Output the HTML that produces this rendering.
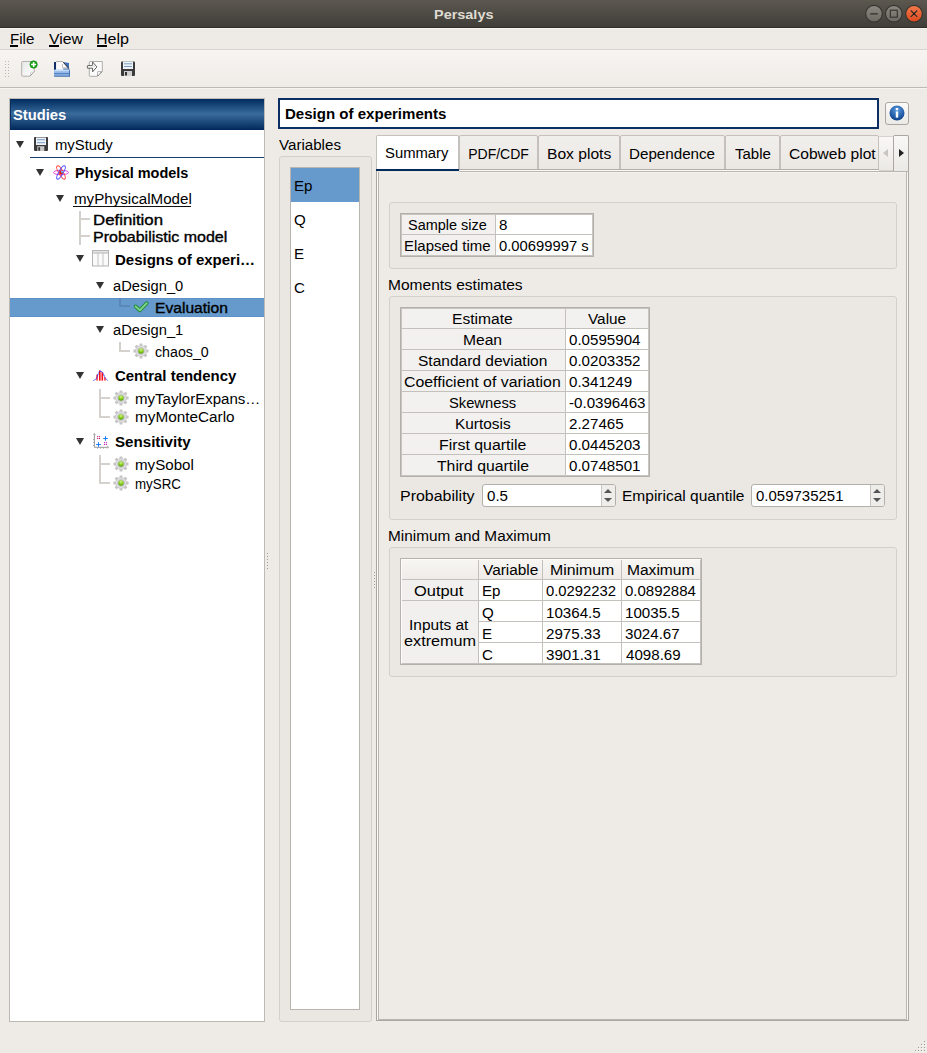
<!DOCTYPE html>
<html><head><meta charset="utf-8"><title>Persalys</title>
<style>
html,body{margin:0;padding:0;}
body{width:927px;height:1053px;position:relative;overflow:hidden;background:#eeebe7;font-family:"Liberation Sans",sans-serif;}
.a{position:absolute;box-sizing:border-box;}
.t{position:absolute;white-space:nowrap;line-height:1;transform-origin:0 0;font-family:"Liberation Sans",sans-serif;}
.tri{position:absolute;width:0;height:0;border-left:4px solid transparent;border-right:4px solid transparent;border-top:7px solid #333;}

</style></head><body>
<!-- title bar -->
<div class="a" style="left:0;top:0;width:927px;height:27px;background:linear-gradient(#5c5850,#403e39)"></div>
<div class="a" style="left:0;top:27px;width:927px;height:1px;background:#302e2a"></div>
<div class="a" style="left:0;top:28px;width:927px;height:1px;background:#f7f5f2"></div>
<!-- window buttons -->
<svg class="a" style="left:864px;top:4px" width="62" height="20" viewBox="0 0 62 20">
 <defs>
  <linearGradient id="gb" x1="0" y1="0" x2="0" y2="1"><stop offset="0" stop-color="#8d8982"/><stop offset="1" stop-color="#6b6862"/></linearGradient>
  <linearGradient id="go" x1="0" y1="0" x2="0" y2="1"><stop offset="0" stop-color="#f47a4c"/><stop offset="1" stop-color="#dc4a1f"/></linearGradient>
 </defs>
 <circle cx="10" cy="9.7" r="8.3" fill="url(#gb)" stroke="#35332f" stroke-width="1.1"/>
 <rect x="6.2" y="9.2" width="7.6" height="1.3" fill="#33312d"/>
 <circle cx="29.8" cy="9.7" r="8.3" fill="url(#gb)" stroke="#35332f" stroke-width="1.1"/>
 <rect x="26.3" y="6.2" width="7" height="7" fill="none" stroke="#33312d" stroke-width="1.1"/>
 <circle cx="50" cy="9.7" r="8.3" fill="url(#go)" stroke="#35332f" stroke-width="1.1"/>
 <path d="M46.8 6.5 L53.2 12.9 M53.2 6.5 L46.8 12.9" stroke="#2e2a26" stroke-width="1.1"/>
 <circle cx="50" cy="9.7" r="1" fill="#1e1a16"/>
</svg>
<!-- menubar -->
<div class="a" style="left:0;top:49px;width:927px;height:1px;background:#d8d4cf"></div>
<div class="a" style="left:10px;top:45px;width:8px;height:2px;background:#000"></div>
<div class="a" style="left:49px;top:45px;width:10px;height:2px;background:#000"></div>
<div class="a" style="left:97px;top:45px;width:10px;height:2px;background:#000"></div>
<!-- toolbar -->
<div class="a" style="left:0;top:50px;width:927px;height:37px;background:linear-gradient(#f7f5f1,#efece8)"></div>
<div class="a" style="left:0;top:87px;width:927px;height:1px;background:#bcb8b3"></div>
<div class="a" style="left:0;top:88px;width:927px;height:1px;background:#f7f5f2"></div>
<svg class="a" style="left:4px;top:61px" width="6" height="18" viewBox="0 0 6 18">
 <g fill="#b9b5b0"><rect x="1" y="0" width="1" height="1"/><rect x="4" y="0" width="1" height="1"/>
 <rect x="1" y="3" width="1" height="1"/><rect x="4" y="3" width="1" height="1"/>
 <rect x="1" y="6" width="1" height="1"/><rect x="4" y="6" width="1" height="1"/>
 <rect x="1" y="9" width="1" height="1"/><rect x="4" y="9" width="1" height="1"/>
 <rect x="1" y="12" width="1" height="1"/><rect x="4" y="12" width="1" height="1"/>
 <rect x="1" y="15" width="1" height="1"/><rect x="4" y="15" width="1" height="1"/></g>
</svg>
<!-- new doc icon -->
<svg class="a" style="left:17px;top:57px" width="24" height="24" viewBox="0 0 24 24">
 <defs><linearGradient id="pg1" x1="0" y1="0" x2="1" y2="1"><stop offset="0" stop-color="#e6e8e8"/><stop offset="1" stop-color="#ffffff"/></linearGradient></defs>
 <path d="M5.5 4.5 H17.2 V14.8 L12.8 19.2 H5.5 Q4.7 19.2 4.7 18.4 V5.3 Q4.7 4.5 5.5 4.5 Z" fill="url(#pg1)" stroke="#b3afaa" stroke-width="1"/>
 <path d="M13 19 L17.2 14.8" stroke="#6a6a6a" stroke-width="0.9" stroke-dasharray="1 0.8"/>
 <path d="M13.4 18.2 L13.6 15.2 L16.6 15" fill="#f4f4f4" stroke="#c8c8c8" stroke-width="0.6"/>
 <circle cx="16.6" cy="7.5" r="3.7" fill="#19a319"/>
 <circle cx="16.6" cy="7.5" r="3.7" fill="none" stroke="#0d860d" stroke-width="0.6"/>
 <path d="M16.6 5 V10 M14.1 7.5 H19.1" stroke="#fff" stroke-width="1.5"/>
</svg>
<!-- open icon -->
<svg class="a" style="left:50px;top:57px" width="24" height="24" viewBox="0 0 24 24">
 <defs><linearGradient id="tr1" x1="0" y1="0" x2="0" y2="1"><stop offset="0" stop-color="#b6d2f4"/><stop offset="0.5" stop-color="#8db2e4"/><stop offset="1" stop-color="#6f9ad4"/></linearGradient></defs>
 <rect x="4" y="5" width="2.2" height="8" fill="#0f2f66"/>
 <path d="M13 5 L19 6 V13 H13 Z" fill="#3f6fb8"/>
 <rect x="6.2" y="4.3" width="7" height="8.7" fill="#f9f9f9"/>
 <path d="M6.2 4.5 H13" stroke="#a9a6a2" stroke-width="0.9"/>
 <path d="M13 4.8 L18.8 11.6 H13 Z" fill="#fbfbfb"/>
 <path d="M13.2 5.2 L18.8 11.6" stroke="#111" stroke-width="0.9"/>
 <path d="M12.5 7 V10.8 H17" fill="none" stroke="#b0b0b0" stroke-width="0.8"/>
 <rect x="4" y="12.5" width="15.8" height="7.2" rx="1" fill="url(#tr1)"/>
 <rect x="5" y="13" width="14" height="0.8" fill="#cfe3fb"/>
 <rect x="4" y="16.2" width="15.8" height="0.8" fill="#4d7dc0"/>
 <rect x="4" y="19" width="15.8" height="0.7" fill="#5f7fae"/>
 <rect x="19" y="12.5" width="0.8" height="7" fill="#3a63a5"/>
</svg>
<!-- import icon -->
<svg class="a" style="left:83px;top:57px" width="24" height="24" viewBox="0 0 24 24">
 <path d="M7 4.5 H19.3 V14.3 L14.3 19.3 H7 Q6.3 19.3 6.3 18.6 V5.2 Q6.3 4.5 7 4.5 Z" fill="#fbfbfb" stroke="#b1ada8" stroke-width="1"/>
 <path d="M14.5 19 V15 Q14.5 14.5 15 14.5 H19" fill="#f6f6f6" stroke="#a9a9a9" stroke-width="0.8"/>
 <path d="M14.5 19 L19.2 14.4" stroke="#333" stroke-width="0.9" stroke-dasharray="0.9 0.7"/>
 <path d="M4.6 8.6 H9.6 V5 L13.9 9.9 L9.6 14.8 V11.2 H4.6 Q3.9 9.9 4.6 8.6 Z" fill="#fff" stroke="#505050" stroke-width="0.9" stroke-linejoin="round"/>
 <path d="M9.3 9.2 H12" stroke="#e6e6e6" stroke-width="1.6"/>
</svg>
<!-- save icon -->
<svg class="a" style="left:121px;top:61px" width="15" height="16" viewBox="0 0 15 16">
 <rect x="0" y="0.5" width="14" height="14.5" rx="1" fill="#3b3b3b"/>
 <rect x="2" y="0.5" width="10" height="7.5" fill="#eef3f8"/>
 <rect x="3" y="2.3" width="8" height="1" fill="#7b9cc4"/>
 <rect x="3" y="5" width="8" height="1" fill="#7b9cc4"/>
 <rect x="3" y="10" width="8" height="5" fill="#d0d0d0"/>
 <rect x="4" y="11" width="2" height="3.5" fill="#333"/>
</svg>

<!-- Studies panel -->
<div class="a" style="left:9px;top:98px;width:256px;height:924px;background:#fff;border:1px solid #bdb9b4"></div>
<div class="a" style="left:10px;top:99px;width:254px;height:31px;background:linear-gradient(#002b5e 0%,#3a6b9d 48%,#00285a 100%)"></div>
<div class="a" style="left:10px;top:99px;width:1px;height:31px;background:#0a2f5e"></div>
<!-- myStudy row -->
<div class="tri" style="left:16px;top:141px"></div>
<svg class="a" style="left:34px;top:137px" width="14" height="14" viewBox="0 0 14 14">
 <rect x="0" y="0" width="14" height="14" rx="1" fill="#3b3b3b"/>
 <rect x="2" y="0.5" width="10" height="7.5" fill="#eef3f8"/>
 <rect x="3" y="2.2" width="8" height="1" fill="#7b9cc4"/>
 <rect x="3" y="5.2" width="8" height="1" fill="#7b9cc4"/>
 <rect x="3.3" y="9.2" width="7" height="4.8" fill="#c8c8c8"/>
 <rect x="4.3" y="10.2" width="1.8" height="3.5" fill="#333"/>
</svg>
<div class="a" style="left:30px;top:157px;width:234px;height:1px;background:#1a3d6b"></div>
<!-- physical models -->
<div class="tri" style="left:36px;top:169px"></div>
<svg class="a" style="left:53px;top:165px" width="16" height="15" viewBox="0 0 16 15">
 <ellipse cx="8" cy="7.5" rx="7.5" ry="2.2" fill="none" stroke="#e040e0" stroke-width="1"/>
 <ellipse cx="8" cy="7.5" rx="7.5" ry="2.2" fill="none" stroke="#ff4040" stroke-width="1" transform="rotate(60 8 7.5)"/>
 <ellipse cx="8" cy="7.5" rx="7.5" ry="2.2" fill="none" stroke="#4a4aff" stroke-width="1" transform="rotate(-60 8 7.5)"/>
 <circle cx="8" cy="7.5" r="2" fill="#e02020"/>
 <circle cx="9" cy="6.8" r="1" fill="#40d0ff"/>
</svg>
<!-- myPhysicalModel -->
<div class="tri" style="left:56px;top:195px"></div>
<div class="a" style="left:73px;top:206px;width:118px;height:1px;background:#111"></div>
<!-- branch lines -->
<!-- designs -->
<div class="tri" style="left:76px;top:255px"></div>
<svg class="a" style="left:92px;top:250px" width="17" height="17" viewBox="0 0 17 17">
 <rect x="0.5" y="0.5" width="16" height="15.5" fill="#fafafa" stroke="#b3b3b3"/>
 <rect x="0.5" y="0.5" width="16" height="2.5" fill="#e6e6e6" stroke="#b3b3b3"/>
 <path d="M6 3 V16 M11 3 V16" stroke="#c4c4c4"/>
</svg>
<!-- aDesign_0 -->
<div class="tri" style="left:96px;top:282px"></div>
<!-- selected row -->
<div class="a" style="left:10px;top:298px;width:254px;height:19px;background:#6699cc;border-top:1px solid #5d91c7;border-bottom:1px solid #5d91c7"></div>
<svg class="a" style="left:130px;top:298px" width="22" height="18" viewBox="0 0 22 18">
 <path d="M5.6 8.4 L9.9 12.3 L16.6 5.2" fill="none" stroke="#178a30" stroke-width="3.8" stroke-linejoin="round" stroke-linecap="round"/>
 <path d="M5.6 8.4 L9.9 12.3 L16.6 5.2" fill="none" stroke="#7dcf8a" stroke-width="2" stroke-linejoin="round" stroke-linecap="round"/>
</svg>
<!-- aDesign_1 -->
<div class="tri" style="left:96px;top:326px"></div>
<svg class="a" style="left:133px;top:343px" width="16" height="16" viewBox="0 0 16 16"><defs><radialGradient id="gg133343" cx="0.5" cy="0.3" r="0.7"><stop offset="0" stop-color="#d8f59a"/><stop offset="0.5" stop-color="#8ccf1e"/><stop offset="1" stop-color="#4f9a10"/></radialGradient></defs><rect x="6.5" y="0.4" width="3" height="3.6" rx="0.5" fill="#c6c6c6" transform="rotate(0 8 8)"/><rect x="6.5" y="0.4" width="3" height="3.6" rx="0.5" fill="#c6c6c6" transform="rotate(45 8 8)"/><rect x="6.5" y="0.4" width="3" height="3.6" rx="0.5" fill="#c6c6c6" transform="rotate(90 8 8)"/><rect x="6.5" y="0.4" width="3" height="3.6" rx="0.5" fill="#c6c6c6" transform="rotate(135 8 8)"/><rect x="6.5" y="0.4" width="3" height="3.6" rx="0.5" fill="#c6c6c6" transform="rotate(180 8 8)"/><rect x="6.5" y="0.4" width="3" height="3.6" rx="0.5" fill="#c6c6c6" transform="rotate(225 8 8)"/><rect x="6.5" y="0.4" width="3" height="3.6" rx="0.5" fill="#c6c6c6" transform="rotate(270 8 8)"/><rect x="6.5" y="0.4" width="3" height="3.6" rx="0.5" fill="#c6c6c6" transform="rotate(315 8 8)"/><circle cx="8" cy="8" r="5.4" fill="#e4e4e4" stroke="#c2c2c2" stroke-width="0.7"/><circle cx="8" cy="8" r="3.4" fill="none" stroke="#b8b4bc" stroke-width="0.8"/><circle cx="8" cy="8" r="2.7" fill="url(#gg133343)"/></svg>
<!-- central tendency -->
<div class="tri" style="left:76px;top:372px"></div>
<svg class="a" style="left:90px;top:366px" width="22" height="18" viewBox="0 0 22 18">
 <rect x="10" y="5.5" width="2.3" height="9" fill="#ff9a9a"/>
 <g fill="#ff1010"><rect x="6.4" y="8.6" width="1.3" height="6"/><rect x="9" y="4.3" width="1.3" height="10.3"/><rect x="11.8" y="6.5" width="1.3" height="8.1"/><rect x="14.3" y="11.3" width="1.3" height="3.3"/></g>
 <path d="M3.5 14.5 L5.5 13.4 L6.8 12 L8.3 7.5 L9.6 5.2 L11.3 5.3 L12.8 6.6 L13.8 9 L15 11.6 L16.5 13.4 L17.6 14.5" fill="none" stroke="#2020ff" stroke-width="1" stroke-dasharray="1 0.5"/>
</svg>
<svg class="a" style="left:113px;top:390px" width="16" height="16" viewBox="0 0 16 16"><defs><radialGradient id="gg113390" cx="0.5" cy="0.3" r="0.7"><stop offset="0" stop-color="#d8f59a"/><stop offset="0.5" stop-color="#8ccf1e"/><stop offset="1" stop-color="#4f9a10"/></radialGradient></defs><rect x="6.5" y="0.4" width="3" height="3.6" rx="0.5" fill="#c6c6c6" transform="rotate(0 8 8)"/><rect x="6.5" y="0.4" width="3" height="3.6" rx="0.5" fill="#c6c6c6" transform="rotate(45 8 8)"/><rect x="6.5" y="0.4" width="3" height="3.6" rx="0.5" fill="#c6c6c6" transform="rotate(90 8 8)"/><rect x="6.5" y="0.4" width="3" height="3.6" rx="0.5" fill="#c6c6c6" transform="rotate(135 8 8)"/><rect x="6.5" y="0.4" width="3" height="3.6" rx="0.5" fill="#c6c6c6" transform="rotate(180 8 8)"/><rect x="6.5" y="0.4" width="3" height="3.6" rx="0.5" fill="#c6c6c6" transform="rotate(225 8 8)"/><rect x="6.5" y="0.4" width="3" height="3.6" rx="0.5" fill="#c6c6c6" transform="rotate(270 8 8)"/><rect x="6.5" y="0.4" width="3" height="3.6" rx="0.5" fill="#c6c6c6" transform="rotate(315 8 8)"/><circle cx="8" cy="8" r="5.4" fill="#e4e4e4" stroke="#c2c2c2" stroke-width="0.7"/><circle cx="8" cy="8" r="3.4" fill="none" stroke="#b8b4bc" stroke-width="0.8"/><circle cx="8" cy="8" r="2.7" fill="url(#gg113390)"/></svg>
<svg class="a" style="left:113px;top:409px" width="16" height="16" viewBox="0 0 16 16"><defs><radialGradient id="gg113409" cx="0.5" cy="0.3" r="0.7"><stop offset="0" stop-color="#d8f59a"/><stop offset="0.5" stop-color="#8ccf1e"/><stop offset="1" stop-color="#4f9a10"/></radialGradient></defs><rect x="6.5" y="0.4" width="3" height="3.6" rx="0.5" fill="#c6c6c6" transform="rotate(0 8 8)"/><rect x="6.5" y="0.4" width="3" height="3.6" rx="0.5" fill="#c6c6c6" transform="rotate(45 8 8)"/><rect x="6.5" y="0.4" width="3" height="3.6" rx="0.5" fill="#c6c6c6" transform="rotate(90 8 8)"/><rect x="6.5" y="0.4" width="3" height="3.6" rx="0.5" fill="#c6c6c6" transform="rotate(135 8 8)"/><rect x="6.5" y="0.4" width="3" height="3.6" rx="0.5" fill="#c6c6c6" transform="rotate(180 8 8)"/><rect x="6.5" y="0.4" width="3" height="3.6" rx="0.5" fill="#c6c6c6" transform="rotate(225 8 8)"/><rect x="6.5" y="0.4" width="3" height="3.6" rx="0.5" fill="#c6c6c6" transform="rotate(270 8 8)"/><rect x="6.5" y="0.4" width="3" height="3.6" rx="0.5" fill="#c6c6c6" transform="rotate(315 8 8)"/><circle cx="8" cy="8" r="5.4" fill="#e4e4e4" stroke="#c2c2c2" stroke-width="0.7"/><circle cx="8" cy="8" r="3.4" fill="none" stroke="#b8b4bc" stroke-width="0.8"/><circle cx="8" cy="8" r="2.7" fill="url(#gg113409)"/></svg>
<!-- sensitivity -->
<div class="tri" style="left:76px;top:438px"></div>
<svg class="a" style="left:90px;top:431px" width="22" height="20" viewBox="0 0 22 20">
 <path d="M4.4 2.5 V16.3 H18.5" fill="none" stroke="#9a9a9a" stroke-width="1"/>
 <path d="M3.3 4.2 L4.4 2.4 L5.5 4.2 M16.8 15.2 L18.6 16.3 L16.8 17.4" fill="none" stroke="#a8a8a8" stroke-width="0.8"/>
 <g stroke="#9a9a9a" stroke-width="0.9"><path d="M3.2 8.5 H4.4 M3.2 11.5 H4.4 M3.2 14.5 H4.4 M7.5 16.3 V17.6 M10.5 16.3 V17.6 M13.5 16.3 V17.6"/></g>
 <g fill="#c0206e"><circle cx="7.7" cy="5.6" r="0.7"/><circle cx="9.5" cy="5.6" r="0.7"/><circle cx="7.7" cy="7.4" r="0.7"/><circle cx="9.5" cy="7.4" r="0.7"/></g>
 <g fill="#c020b4"><circle cx="14.5" cy="11.6" r="0.7"/><circle cx="16.4" cy="11.6" r="0.7"/><circle cx="14.5" cy="13.4" r="0.7"/><circle cx="16.4" cy="13.4" r="0.7"/></g>
 <g stroke="#1a7aff" stroke-width="1"><path d="M15.5 5.2 V9.8 M13.2 7.5 H17.8"/><path d="M8.5 11.2 V15.8 M6.2 13.5 H10.8"/></g>
</svg>
<svg class="a" style="left:113px;top:456px" width="16" height="16" viewBox="0 0 16 16"><defs><radialGradient id="gg113456" cx="0.5" cy="0.3" r="0.7"><stop offset="0" stop-color="#d8f59a"/><stop offset="0.5" stop-color="#8ccf1e"/><stop offset="1" stop-color="#4f9a10"/></radialGradient></defs><rect x="6.5" y="0.4" width="3" height="3.6" rx="0.5" fill="#c6c6c6" transform="rotate(0 8 8)"/><rect x="6.5" y="0.4" width="3" height="3.6" rx="0.5" fill="#c6c6c6" transform="rotate(45 8 8)"/><rect x="6.5" y="0.4" width="3" height="3.6" rx="0.5" fill="#c6c6c6" transform="rotate(90 8 8)"/><rect x="6.5" y="0.4" width="3" height="3.6" rx="0.5" fill="#c6c6c6" transform="rotate(135 8 8)"/><rect x="6.5" y="0.4" width="3" height="3.6" rx="0.5" fill="#c6c6c6" transform="rotate(180 8 8)"/><rect x="6.5" y="0.4" width="3" height="3.6" rx="0.5" fill="#c6c6c6" transform="rotate(225 8 8)"/><rect x="6.5" y="0.4" width="3" height="3.6" rx="0.5" fill="#c6c6c6" transform="rotate(270 8 8)"/><rect x="6.5" y="0.4" width="3" height="3.6" rx="0.5" fill="#c6c6c6" transform="rotate(315 8 8)"/><circle cx="8" cy="8" r="5.4" fill="#e4e4e4" stroke="#c2c2c2" stroke-width="0.7"/><circle cx="8" cy="8" r="3.4" fill="none" stroke="#b8b4bc" stroke-width="0.8"/><circle cx="8" cy="8" r="2.7" fill="url(#gg113456)"/></svg>
<svg class="a" style="left:113px;top:475px" width="16" height="16" viewBox="0 0 16 16"><defs><radialGradient id="gg113475" cx="0.5" cy="0.3" r="0.7"><stop offset="0" stop-color="#d8f59a"/><stop offset="0.5" stop-color="#8ccf1e"/><stop offset="1" stop-color="#4f9a10"/></radialGradient></defs><rect x="6.5" y="0.4" width="3" height="3.6" rx="0.5" fill="#c6c6c6" transform="rotate(0 8 8)"/><rect x="6.5" y="0.4" width="3" height="3.6" rx="0.5" fill="#c6c6c6" transform="rotate(45 8 8)"/><rect x="6.5" y="0.4" width="3" height="3.6" rx="0.5" fill="#c6c6c6" transform="rotate(90 8 8)"/><rect x="6.5" y="0.4" width="3" height="3.6" rx="0.5" fill="#c6c6c6" transform="rotate(135 8 8)"/><rect x="6.5" y="0.4" width="3" height="3.6" rx="0.5" fill="#c6c6c6" transform="rotate(180 8 8)"/><rect x="6.5" y="0.4" width="3" height="3.6" rx="0.5" fill="#c6c6c6" transform="rotate(225 8 8)"/><rect x="6.5" y="0.4" width="3" height="3.6" rx="0.5" fill="#c6c6c6" transform="rotate(270 8 8)"/><rect x="6.5" y="0.4" width="3" height="3.6" rx="0.5" fill="#c6c6c6" transform="rotate(315 8 8)"/><circle cx="8" cy="8" r="5.4" fill="#e4e4e4" stroke="#c2c2c2" stroke-width="0.7"/><circle cx="8" cy="8" r="3.4" fill="none" stroke="#b8b4bc" stroke-width="0.8"/><circle cx="8" cy="8" r="2.7" fill="url(#gg113475)"/></svg>

<!-- header title box -->
<div class="a" style="left:278px;top:98px;width:601px;height:31px;background:#fff;border:2px solid #0b2f63"></div>
<!-- info button -->
<div class="a" style="left:885px;top:102px;width:24px;height:23px;border:1px solid #aaa6a1;border-radius:3px;background:linear-gradient(#fbfaf9,#eceae6)"></div>
<svg class="a" style="left:889px;top:105px" width="16" height="16" viewBox="0 0 16 16">
 <defs><radialGradient id="gi" cx="0.5" cy="0.3" r="0.7"><stop offset="0" stop-color="#5a9be0"/><stop offset="1" stop-color="#0a3f8c"/></radialGradient></defs>
 <circle cx="8" cy="8" r="7.5" fill="url(#gi)"/>
 <rect x="6.8" y="3" width="2.4" height="2.2" fill="#fff"/>
 <rect x="6.8" y="6.4" width="2.4" height="6.2" fill="#fff"/>
</svg>

<!-- variables group -->
<div class="a" style="left:279px;top:156px;width:93px;height:866px;border:1px solid #d3cfca;border-radius:3px;background:#eae7e3"></div>
<div class="a" style="left:290px;top:167px;width:70px;height:843px;border:1px solid #b8b4af;background:#fff"></div>
<div class="a" style="left:291px;top:168px;width:68px;height:34px;background:#6699cc"></div>

<!-- tabs -->
<div class="a" style="left:376px;top:135px;width:83px;height:36px;background:#fff;border:1px solid #c4c0bb;border-bottom:none;border-radius:2px 2px 0 0"></div>
<div class="a" style="left:459px;top:135px;width:79px;height:35px;background:linear-gradient(#f1efec,#ebe8e4);border:1px solid #c4c0bb;border-radius:2px 2px 0 0"></div>
<div class="a" style="left:538px;top:135px;width:82px;height:35px;background:linear-gradient(#f1efec,#ebe8e4);border:1px solid #c4c0bb;border-radius:2px 2px 0 0"></div>
<div class="a" style="left:620px;top:135px;width:105px;height:35px;background:linear-gradient(#f1efec,#ebe8e4);border:1px solid #c4c0bb;border-radius:2px 2px 0 0"></div>
<div class="a" style="left:725px;top:135px;width:55px;height:35px;background:linear-gradient(#f1efec,#ebe8e4);border:1px solid #c4c0bb;border-radius:2px 2px 0 0"></div>
<div class="a" style="left:780px;top:135px;width:99px;height:35px;background:linear-gradient(#f1efec,#ebe8e4);border:1px solid #c4c0bb;border-radius:2px 2px 0 0"></div>
<div class="a" style="left:459px;top:169px;width:420px;height:1px;background:#b0aca8"></div>
<div class="a" style="left:459px;top:170px;width:450px;height:1px;background:#fbfaf8"></div>
<!-- scroll buttons -->
<div class="a" style="left:879px;top:136px;width:15px;height:35px;background:linear-gradient(#f9f8f6,#ebe9e5);border:1px solid #d6d2cd;border-left:none;border-radius:0 2px 0 0"></div>
<div class="a" style="left:893px;top:135px;width:16px;height:36px;background:linear-gradient(#f9f8f6,#ebe9e5);border:1px solid #aaa6a1;border-bottom:none;border-radius:2px 2px 0 0"></div>
<div class="a" style="left:883px;top:149px;width:0;height:0;border-top:4px solid transparent;border-bottom:4px solid transparent;border-right:5px solid #c9c5c0"></div>
<div class="a" style="left:899px;top:149px;width:0;height:0;border-top:4px solid transparent;border-bottom:4px solid transparent;border-left:5px solid #222"></div>
<!-- pane -->
<div class="a" style="left:376px;top:171px;width:533px;height:850px;border:1px solid #aaa6a1;border-top-color:#b9b5b0"></div>
<div class="a" style="left:377px;top:172px;width:531px;height:848px;border-left:1px solid #fbfaf7;border-right:1px solid #fbfaf7;border-top:1px solid #f3f1ed"></div>
<div class="a" style="left:378px;top:172px;width:529px;height:848px;border-left:1px solid #b7b3ae;border-right:1px solid #b9b5b0;border-bottom:1px solid #b9b5b0"></div>
<div class="a" style="left:376px;top:169px;width:83px;height:2px;background:#002a5c"></div>
<div class="a" style="left:377px;top:171px;width:82px;height:1px;background:#ece6de"></div>
<!-- group 1 -->
<div class="a" style="left:389px;top:202px;width:508px;height:67px;border:1px solid #d3cfca;border-radius:3px;background:#ebe8e4"></div>
<div class="a" style="left:400px;top:213px;width:194px;height:44px;border:1px solid #b3afab;background:#fff"></div><div class="a" style="left:401px;top:214px;width:192px;height:42px;border:1px solid #c8c4bf"></div><div class="a" style="left:402px;top:215px;width:93px;height:40px;background:#f2f1ef"></div><div class="a" style="left:495px;top:215px;width:1px;height:40px;background:#c4c0bb"></div><div class="a" style="left:402px;top:234px;width:190px;height:1px;background:#c4c0bb"></div>
<!-- group 2 -->
<div class="a" style="left:389px;top:296px;width:508px;height:224px;border:1px solid #d3cfca;border-radius:3px;background:#ebe8e4"></div>
<div class="a" style="left:400px;top:307px;width:250px;height:170px;border:1px solid #b3afab;background:#fff"></div><div class="a" style="left:401px;top:308px;width:248px;height:168px;border:1px solid #c8c4bf"></div><div class="a" style="left:402px;top:309px;width:163px;height:166px;background:#f2f1ef"></div><div class="a" style="left:565px;top:309px;width:83px;height:19px;background:#f2f1ef"></div><div class="a" style="left:565px;top:309px;width:1px;height:166px;background:#c4c0bb"></div><div class="a" style="left:402px;top:328px;width:246px;height:1px;background:#c4c0bb"></div><div class="a" style="left:402px;top:349px;width:246px;height:1px;background:#c4c0bb"></div><div class="a" style="left:402px;top:370px;width:246px;height:1px;background:#c4c0bb"></div><div class="a" style="left:402px;top:391px;width:246px;height:1px;background:#c4c0bb"></div><div class="a" style="left:402px;top:412px;width:246px;height:1px;background:#c4c0bb"></div><div class="a" style="left:402px;top:433px;width:246px;height:1px;background:#c4c0bb"></div><div class="a" style="left:402px;top:454px;width:246px;height:1px;background:#c4c0bb"></div>
<!-- spinboxes -->
<div class="a" style="left:482px;top:484px;width:134px;height:23px;border:1px solid #b3afaa;border-radius:3px;background:#fff"></div>
<div class="a" style="left:601px;top:485px;width:14px;height:21px;border-left:1px solid #c9c5c0;background:#efedea;border-radius:0 2px 2px 0"></div>
<div class="a" style="left:604px;top:489px;width:0;height:0;border-left:4px solid transparent;border-right:4px solid transparent;border-bottom:4px solid #555"></div>
<div class="a" style="left:604px;top:498px;width:0;height:0;border-left:4px solid transparent;border-right:4px solid transparent;border-top:4px solid #555"></div>
<div class="a" style="left:751px;top:484px;width:134px;height:23px;border:1px solid #b3afaa;border-radius:3px;background:#fff"></div>
<div class="a" style="left:870px;top:485px;width:14px;height:21px;border-left:1px solid #c9c5c0;background:#efedea;border-radius:0 2px 2px 0"></div>
<div class="a" style="left:873px;top:489px;width:0;height:0;border-left:4px solid transparent;border-right:4px solid transparent;border-bottom:4px solid #555"></div>
<div class="a" style="left:873px;top:498px;width:0;height:0;border-left:4px solid transparent;border-right:4px solid transparent;border-top:4px solid #555"></div>

<!-- group 3 -->
<div class="a" style="left:389px;top:547px;width:508px;height:130px;border:1px solid #d3cfca;border-radius:3px;background:#ebe8e4"></div>
<div class="a" style="left:400px;top:558px;width:302px;height:107px;border:1px solid #b3afab;border-top-color:#b5b1ac;border-left-color:#b5b1ac;background:#fff"></div><div class="a" style="left:401px;top:559px;width:300px;height:105px;border-left:1px solid #fdfcfb;border-top:1px solid #fdfcfb;border-right:1px solid #c5c1bc;border-bottom:1px solid #c5c1bc"></div><div class="a" style="left:402px;top:560px;width:298px;height:19px;background:linear-gradient(#f8f6f3,#eeebe8)"></div><div class="a" style="left:402px;top:580px;width:76px;height:83px;background:#f1f0ee"></div><div class="a" style="left:478px;top:560px;width:1px;height:103px;background:#c4c0bb"></div><div class="a" style="left:542px;top:560px;width:1px;height:103px;background:#c4c0bb"></div><div class="a" style="left:621px;top:560px;width:1px;height:103px;background:#c4c0bb"></div><div class="a" style="left:402px;top:579px;width:298px;height:1px;background:#c4c0bb"></div><div class="a" style="left:402px;top:600px;width:298px;height:1px;background:#c4c0bb"></div><div class="a" style="left:478px;top:621px;width:222px;height:1px;background:#c4c0bb"></div><div class="a" style="left:478px;top:642px;width:222px;height:1px;background:#c4c0bb"></div>

<!-- branches -->
<div class="a" style="left:79px;top:211px;width:2px;height:34px;background:#d5d1cc"></div><div class="a" style="left:81px;top:218px;width:9px;height:2px;background:#d5d1cc"></div><div class="a" style="left:81px;top:235px;width:9px;height:2px;background:#d5d1cc"></div><div class="a" style="left:119px;top:298px;width:2px;height:9px;background:#5b88b8"></div><div class="a" style="left:121px;top:305px;width:9px;height:2px;background:#5b88b8"></div><div class="a" style="left:119px;top:342px;width:2px;height:10px;background:#d5d1cc"></div><div class="a" style="left:121px;top:350px;width:9px;height:2px;background:#d5d1cc"></div><div class="a" style="left:99px;top:389px;width:2px;height:29px;background:#d5d1cc"></div><div class="a" style="left:101px;top:397px;width:9px;height:2px;background:#d5d1cc"></div><div class="a" style="left:101px;top:416px;width:9px;height:2px;background:#d5d1cc"></div><div class="a" style="left:99px;top:455px;width:2px;height:29px;background:#d5d1cc"></div><div class="a" style="left:101px;top:463px;width:9px;height:2px;background:#d5d1cc"></div><div class="a" style="left:101px;top:482px;width:9px;height:2px;background:#d5d1cc"></div>
<!-- splitter handles -->
<div class="a" style="left:267px;top:553px;width:1px;height:1px;background:#9c9a97"></div><div class="a" style="left:267px;top:556px;width:1px;height:1px;background:#9c9a97"></div><div class="a" style="left:267px;top:559px;width:1px;height:1px;background:#9c9a97"></div><div class="a" style="left:267px;top:562px;width:1px;height:1px;background:#9c9a97"></div><div class="a" style="left:267px;top:565px;width:1px;height:1px;background:#9c9a97"></div><div class="a" style="left:267px;top:568px;width:1px;height:1px;background:#9c9a97"></div><div class="a" style="left:374px;top:572px;width:1px;height:1px;background:#9c9a97"></div><div class="a" style="left:374px;top:575px;width:1px;height:1px;background:#9c9a97"></div><div class="a" style="left:374px;top:578px;width:1px;height:1px;background:#9c9a97"></div><div class="a" style="left:374px;top:581px;width:1px;height:1px;background:#9c9a97"></div><div class="a" style="left:374px;top:584px;width:1px;height:1px;background:#9c9a97"></div><div class="a" style="left:374px;top:587px;width:1px;height:1px;background:#9c9a97"></div>
<!-- resize grip -->
<svg class="a" style="left:915px;top:1041px" width="12" height="12" viewBox="0 0 12 12"><rect x="10" y="1" width="1" height="1" fill="#fbfaf8"/><rect x="9" y="0" width="1" height="1" fill="#9c9a97"/><rect x="7" y="4" width="1" height="1" fill="#fbfaf8"/><rect x="6" y="3" width="1" height="1" fill="#9c9a97"/><rect x="10" y="4" width="1" height="1" fill="#fbfaf8"/><rect x="9" y="3" width="1" height="1" fill="#9c9a97"/><rect x="4" y="7" width="1" height="1" fill="#fbfaf8"/><rect x="3" y="6" width="1" height="1" fill="#9c9a97"/><rect x="7" y="7" width="1" height="1" fill="#fbfaf8"/><rect x="6" y="6" width="1" height="1" fill="#9c9a97"/><rect x="10" y="7" width="1" height="1" fill="#fbfaf8"/><rect x="9" y="6" width="1" height="1" fill="#9c9a97"/><rect x="1" y="10" width="1" height="1" fill="#fbfaf8"/><rect x="0" y="9" width="1" height="1" fill="#9c9a97"/><rect x="4" y="10" width="1" height="1" fill="#fbfaf8"/><rect x="3" y="9" width="1" height="1" fill="#9c9a97"/><rect x="7" y="10" width="1" height="1" fill="#fbfaf8"/><rect x="6" y="9" width="1" height="1" fill="#9c9a97"/><rect x="10" y="10" width="1" height="1" fill="#fbfaf8"/><rect x="9" y="9" width="1" height="1" fill="#9c9a97"/></svg>

<div class="t" style="left:433.93px;top:8.00px;font-size:13.5px;font-weight:bold;color:#dfdbd2;transform:scaleX(1.0704);">Persalys</div>
<div class="t" style="left:10.22px;top:32.00px;font-size:14px;font-weight:normal;color:#000;transform:scaleX(1.0810);">File</div>
<div class="t" style="left:49.00px;top:32.00px;font-size:14px;font-weight:normal;color:#000;transform:scaleX(1.1267);">View</div>
<div class="t" style="left:96.25px;top:32.00px;font-size:14px;font-weight:normal;color:#000;transform:scaleX(1.1481);">Help</div>
<div class="t" style="left:12.55px;top:107.50px;font-size:14px;font-weight:bold;color:#ffffff;transform:scaleX(1.0531);">Studies</div>
<div class="t" style="left:55.24px;top:138.10px;font-size:14px;font-weight:normal;color:#000;transform:scaleX(1.0611);">myStudy</div>
<div class="t" style="left:75.37px;top:166.30px;font-size:14px;font-weight:bold;color:#000;transform:scaleX(1.0333);">Physical models</div>
<div class="t" style="left:73.52px;top:192.30px;font-size:14px;font-weight:normal;color:#000;transform:scaleX(1.0813);">myPhysicalModel</div>
<div class="t" style="left:93.40px;top:212.80px;font-size:14px;font-weight:normal;color:#000;transform:scaleX(1.2000);-webkit-text-stroke:0.35px #000;">Definition</div>
<div class="t" style="left:93.46px;top:229.50px;font-size:14px;font-weight:normal;color:#000;transform:scaleX(1.1431);-webkit-text-stroke:0.35px #000;">Probabilistic model</div>
<div class="t" style="left:115.43px;top:252.50px;font-size:14px;font-weight:bold;color:#000;transform:scaleX(1.0719);">Designs of experi…</div>
<div class="t" style="left:113.15px;top:279.00px;font-size:14px;font-weight:normal;color:#000;transform:scaleX(1.0500);">aDesign_0</div>
<div class="t" style="left:155.08px;top:301.00px;font-size:14px;font-weight:normal;color:#000;transform:scaleX(1.1156);-webkit-text-stroke:0.35px #000;">Evaluation</div>
<div class="t" style="left:113.15px;top:323.00px;font-size:14px;font-weight:normal;color:#000;transform:scaleX(1.0500);">aDesign_1</div>
<div class="t" style="left:155.18px;top:345.00px;font-size:14px;font-weight:normal;color:#000;transform:scaleX(1.0154);">chaos_0</div>
<div class="t" style="left:115.43px;top:369.00px;font-size:14px;font-weight:bold;color:#000;transform:scaleX(1.0681);">Central tendency</div>
<div class="t" style="left:135.33px;top:392.00px;font-size:14px;font-weight:normal;color:#000;transform:scaleX(1.0746);">myTaylorExpans…</div>
<div class="t" style="left:135.31px;top:410.20px;font-size:14px;font-weight:normal;color:#000;transform:scaleX(1.0944);">myMonteCarlo</div>
<div class="t" style="left:115.42px;top:435.00px;font-size:14px;font-weight:bold;color:#000;transform:scaleX(1.0797);">Sensitivity</div>
<div class="t" style="left:135.32px;top:458.20px;font-size:14px;font-weight:normal;color:#000;transform:scaleX(1.0811);">mySobol</div>
<div class="t" style="left:135.45px;top:477.00px;font-size:14px;font-weight:normal;color:#000;transform:scaleX(0.9532);">mySRC</div>
<div class="t" style="left:284.83px;top:107.00px;font-size:14px;font-weight:bold;color:#000;transform:scaleX(1.0745);">Design of experiments</div>
<div class="t" style="left:278.70px;top:137.50px;font-size:14px;font-weight:normal;color:#000;transform:scaleX(1.0807);">Variables</div>
<div class="t" style="left:294.02px;top:178.90px;font-size:14px;font-weight:normal;color:#000;transform:scaleX(1.0800);">Ep</div>
<div class="t" style="left:294.02px;top:212.90px;font-size:14px;font-weight:normal;color:#000;transform:scaleX(1.0800);">Q</div>
<div class="t" style="left:294.02px;top:246.90px;font-size:14px;font-weight:normal;color:#000;transform:scaleX(1.0800);">E</div>
<div class="t" style="left:294.02px;top:280.70px;font-size:14px;font-weight:normal;color:#000;transform:scaleX(1.0800);">C</div>
<div class="t" style="left:385.34px;top:146.10px;font-size:14px;font-weight:normal;color:#000;transform:scaleX(1.0593);">Summary</div>
<div class="t" style="left:468.20px;top:146.70px;font-size:14px;font-weight:normal;color:#000;transform:scaleX(1.0000);">PDF/CDF</div>
<div class="t" style="left:546.68px;top:146.70px;font-size:14px;font-weight:normal;color:#000;transform:scaleX(1.1161);">Box plots</div>
<div class="t" style="left:629.32px;top:146.70px;font-size:14px;font-weight:normal;color:#000;transform:scaleX(1.0833);">Dependence</div>
<div class="t" style="left:735.00px;top:146.70px;font-size:14px;font-weight:normal;color:#000;transform:scaleX(1.0727);">Table</div>
<div class="t" style="left:788.89px;top:146.70px;font-size:14px;font-weight:normal;color:#000;transform:scaleX(1.1130);">Cobweb plot</div>
<div class="t" style="left:407.97px;top:218.00px;font-size:14px;font-weight:normal;color:#000;transform:scaleX(1.0333);">Sample size</div>
<div class="t" style="left:403.83px;top:239.00px;font-size:14px;font-weight:normal;color:#000;transform:scaleX(1.0700);">Elapsed time</div>
<div class="t" style="left:498.72px;top:218.00px;font-size:14px;font-weight:normal;color:#000;transform:scaleX(1.0800);">8</div>
<div class="t" style="left:499.20px;top:239.00px;font-size:14px;font-weight:normal;color:#000;transform:scaleX(1.0560);">0.00699997 s</div>
<div class="t" style="left:387.59px;top:278.00px;font-size:14px;font-weight:normal;color:#000;transform:scaleX(1.1092);">Moments estimates</div>
<div class="t" style="left:452.28px;top:312.00px;font-size:14px;font-weight:normal;color:#000;transform:scaleX(1.1151);">Estimate</div>
<div class="t" style="left:588.40px;top:312.00px;font-size:14px;font-weight:normal;color:#000;transform:scaleX(1.0971);">Value</div>
<div class="t" style="left:463.38px;top:333.00px;font-size:14px;font-weight:normal;color:#000;transform:scaleX(1.1152);">Mean</div>
<div class="t" style="left:569.20px;top:333.00px;font-size:14px;font-weight:normal;color:#000;transform:scaleX(1.0800);">0.0595904</div>
<div class="t" style="left:418.09px;top:354.00px;font-size:14px;font-weight:normal;color:#000;transform:scaleX(1.1078);">Standard deviation</div>
<div class="t" style="left:569.20px;top:354.00px;font-size:14px;font-weight:normal;color:#000;transform:scaleX(1.0800);">0.0203352</div>
<div class="t" style="left:404.17px;top:375.00px;font-size:14px;font-weight:normal;color:#000;transform:scaleX(1.1336);">Coefficient of variation</div>
<div class="t" style="left:569.20px;top:375.00px;font-size:14px;font-weight:normal;color:#000;transform:scaleX(1.0800);">0.341249</div>
<div class="t" style="left:449.25px;top:396.00px;font-size:14px;font-weight:normal;color:#000;transform:scaleX(1.0516);">Skewness</div>
<div class="t" style="left:568.72px;top:396.00px;font-size:14px;font-weight:normal;color:#000;transform:scaleX(1.0800);">-0.0396463</div>
<div class="t" style="left:455.30px;top:417.00px;font-size:14px;font-weight:normal;color:#000;transform:scaleX(1.1000);">Kurtosis</div>
<div class="t" style="left:568.72px;top:417.00px;font-size:14px;font-weight:normal;color:#000;transform:scaleX(1.0800);">2.27465</div>
<div class="t" style="left:438.67px;top:438.00px;font-size:14px;font-weight:normal;color:#000;transform:scaleX(1.1342);">First quartile</div>
<div class="t" style="left:569.20px;top:438.00px;font-size:14px;font-weight:normal;color:#000;transform:scaleX(1.0800);">0.0445203</div>
<div class="t" style="left:437.40px;top:459.00px;font-size:14px;font-weight:normal;color:#000;transform:scaleX(1.1247);">Third quartile</div>
<div class="t" style="left:569.20px;top:459.00px;font-size:14px;font-weight:normal;color:#000;transform:scaleX(1.0800);">0.0748501</div>
<div class="t" style="left:399.96px;top:489.30px;font-size:14px;font-weight:normal;color:#000;transform:scaleX(1.1406);">Probability</div>
<div class="t" style="left:486.80px;top:489.30px;font-size:14px;font-weight:normal;color:#000;transform:scaleX(1.0800);">0.5</div>
<div class="t" style="left:621.69px;top:489.00px;font-size:14px;font-weight:normal;color:#000;transform:scaleX(1.1083);">Empirical quantile</div>
<div class="t" style="left:756.10px;top:489.30px;font-size:14px;font-weight:normal;color:#000;transform:scaleX(1.0704);">0.059735251</div>
<div class="t" style="left:387.80px;top:528.70px;font-size:14px;font-weight:normal;color:#000;transform:scaleX(1.0959);">Minimum and Maximum</div>
<div class="t" style="left:483.40px;top:563.20px;font-size:14px;font-weight:normal;color:#000;transform:scaleX(1.1000);">Variable</div>
<div class="t" style="left:550.17px;top:563.20px;font-size:14px;font-weight:normal;color:#000;transform:scaleX(1.1327);">Minimum</div>
<div class="t" style="left:627.49px;top:563.20px;font-size:14px;font-weight:normal;color:#000;transform:scaleX(1.1119);">Maximum</div>
<div class="t" style="left:414.33px;top:583.50px;font-size:14px;font-weight:normal;color:#000;transform:scaleX(1.1732);">Output</div>
<div class="t" style="left:482.32px;top:583.50px;font-size:14px;font-weight:normal;color:#000;transform:scaleX(1.0800);">Ep</div>
<div class="t" style="left:546.30px;top:583.50px;font-size:14px;font-weight:normal;color:#000;transform:scaleX(1.0591);">0.0292232</div>
<div class="t" style="left:625.10px;top:583.50px;font-size:14px;font-weight:normal;color:#000;transform:scaleX(1.0712);">0.0892884</div>
<div class="t" style="left:482.32px;top:605.50px;font-size:14px;font-weight:normal;color:#000;transform:scaleX(1.0800);">Q</div>
<div class="t" style="left:546.02px;top:605.50px;font-size:14px;font-weight:normal;color:#000;transform:scaleX(1.0800);">10364.5</div>
<div class="t" style="left:624.62px;top:605.50px;font-size:14px;font-weight:normal;color:#000;transform:scaleX(1.0800);">10035.5</div>
<div class="t" style="left:482.32px;top:626.50px;font-size:14px;font-weight:normal;color:#000;transform:scaleX(1.0800);">E</div>
<div class="t" style="left:546.02px;top:626.50px;font-size:14px;font-weight:normal;color:#000;transform:scaleX(1.0800);">2975.33</div>
<div class="t" style="left:624.62px;top:626.50px;font-size:14px;font-weight:normal;color:#000;transform:scaleX(1.0800);">3024.67</div>
<div class="t" style="left:482.32px;top:647.50px;font-size:14px;font-weight:normal;color:#000;transform:scaleX(1.0800);">C</div>
<div class="t" style="left:546.02px;top:647.50px;font-size:14px;font-weight:normal;color:#000;transform:scaleX(1.0800);">3901.31</div>
<div class="t" style="left:625.70px;top:647.50px;font-size:14px;font-weight:normal;color:#000;transform:scaleX(1.0800);">4098.69</div>
<div class="t" style="left:409.19px;top:617.50px;font-size:14px;font-weight:normal;color:#000;transform:scaleX(1.1057);">Inputs at</div>
<div class="t" style="left:403.64px;top:634.00px;font-size:14px;font-weight:normal;color:#000;transform:scaleX(1.1583);">extremum</div>
</body></html>
